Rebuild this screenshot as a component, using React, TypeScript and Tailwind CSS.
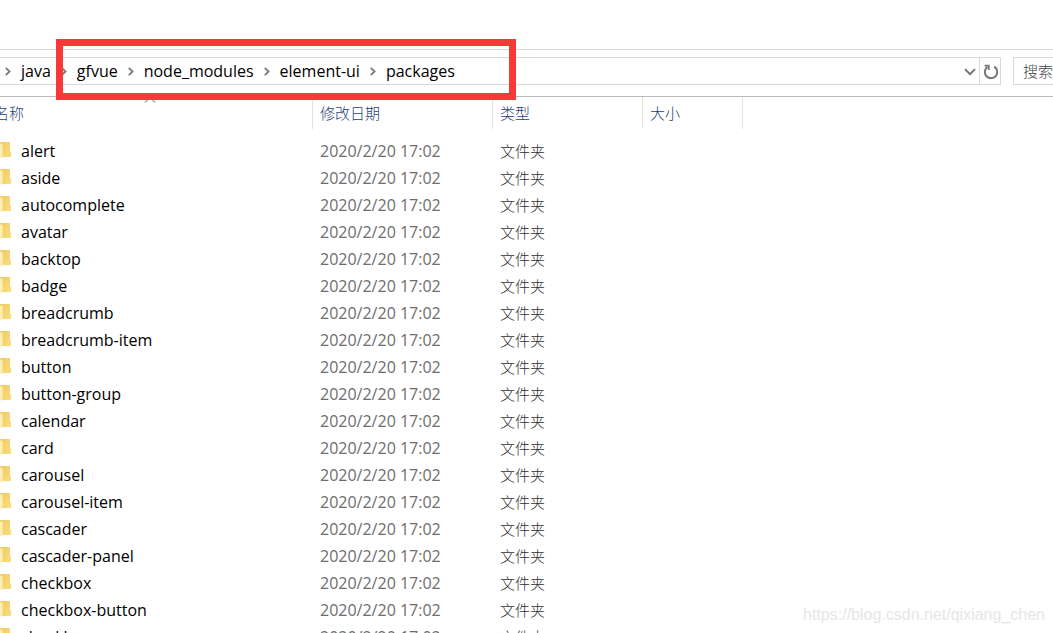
import { Fragment } from "react";

const crumbs = ["java", "gfvue", "node_modules", "element-ui", "packages"];

const folders = [
  "alert",
  "aside",
  "autocomplete",
  "avatar",
  "backtop",
  "badge",
  "breadcrumb",
  "breadcrumb-item",
  "button",
  "button-group",
  "calendar",
  "card",
  "carousel",
  "carousel-item",
  "cascader",
  "cascader-panel",
  "checkbox",
  "checkbox-button",
  "checkbox-group",
];

function Chevron() {
  return (
    <svg className="mx-[10px] h-[9px] w-[6px] shrink-0" viewBox="0 0 6 9" fill="none" aria-hidden="true">
      <path d="M0.8 0.8 L4.6 4.5 L0.8 8.2" stroke="#7a7a7a" strokeWidth="1.8" />
    </svg>
  );
}

function FolderIcon() {
  return (
    <svg className="h-[18px] w-[11px] shrink-0" viewBox="0 0 11 18" aria-hidden="true">
      <defs>
        <linearGradient id="folder" x1="0" y1="0" x2="1" y2="1">
          <stop offset="0" stopColor="#eecb68" />
          <stop offset="1" stopColor="#fbdc7c" />
        </linearGradient>
      </defs>
      <path d="M0 0 H10 V9 L11 10 V15 H0 Z" fill="url(#folder)" />
      <path d="M0 1 L2.6 2.2 V12.5 L1.5 16.5 L0 15.5 Z" fill="#ffeeb4" />
    </svg>
  );
}

export default function App() {
  return (
    <div className="relative h-screen overflow-hidden bg-white pt-[49px] font-['Open_Sans','Noto_Sans_CJK_SC',sans-serif] text-base text-black">
      <header className="flex h-12 border-t border-b border-t-[#dadada] border-b-[#b9b9b9] pt-[7px]">
        <div className="flex h-7 min-w-0 flex-1 border-y border-r border-[#d9d9d9]">
          <nav aria-label="路径" className="relative -ml-[5px] flex items-center">
            {crumbs.map((name) => (
              <Fragment key={name}>
                <Chevron />
                <button type="button" className="leading-5">
                  {name}
                </button>
              </Fragment>
            ))}
            <div className="pointer-events-none absolute -top-[19px] left-[61px] z-10 h-[61px] w-[460px] border-[7px] border-[#fb3838]" />
          </nav>
          <button type="button" aria-label="以前的位置" className="ml-auto flex w-[19px] items-center justify-center pt-0.5">
            <svg className="h-2 w-3" viewBox="0 0 12 8" fill="none">
              <path d="M1 1.2 L6 6.2 L11 1.2" stroke="#6e6e6e" strokeWidth="1.8" />
            </svg>
          </button>
          <button type="button" aria-label="刷新" className="flex w-[21px] items-center justify-center border-l border-[#d9d9d9] pt-0.5">
            <svg className="h-4 w-4" viewBox="0 0 16 16" fill="none">
              <path d="M12.2 2.6 A6.2 6.2 0 1 1 5.4 2.9" stroke="#757575" strokeWidth="2" />
              <path d="M2.6 1.6 H6.8 V6" stroke="#757575" strokeWidth="1.7" />
            </svg>
          </button>
        </div>
        <input
          type="text"
          aria-label="搜索"
          placeholder="搜索"
          className="ml-3 h-7 w-10 border border-r-0 border-[#d9d9d9] pl-[9px] text-[15px] font-light outline-none placeholder:text-[#404040]"
        />
      </header>

      <table className="w-[743px] table-fixed border-collapse text-left">
        <colgroup>
          <col className="w-[313px]" />
          <col className="w-[180px]" />
          <col className="w-[150px]" />
          <col className="w-[100px]" />
        </colgroup>
        <thead className="text-[15px] text-[#24407a]">
          <tr className="h-8">
            <th className="relative p-0 font-light shadow-[inset_-1px_0_0_#e3e3e3]">
              <div className="-ml-1.5 leading-5">名称</div>
              <svg className="absolute top-0 left-36 h-[6px] w-3" viewBox="0 0 12 6" fill="none" aria-hidden="true">
                <path d="M1 5.5 L6 0.5 L11 5.5" stroke="#555555" />
              </svg>
            </th>
            <th className="p-0 pl-[7px] leading-5 font-light shadow-[inset_-1px_0_0_#e3e3e3]">修改日期</th>
            <th className="p-0 pl-[7px] leading-5 font-light shadow-[inset_-1px_0_0_#e3e3e3]">类型</th>
            <th className="p-0 pl-[7px] leading-5 font-light shadow-[inset_-1px_0_0_#e3e3e3]">大小</th>
          </tr>
        </thead>
        <tbody>
          <tr aria-hidden="true" className="h-2">
            <td colSpan={4} className="p-0" />
          </tr>
          {folders.map((name) => (
            <tr key={name} className="h-[27px]">
              <td className="p-0">
                <div className="flex h-[27px] items-center gap-[10px]">
                  <FolderIcon />
                  <span className="leading-5">{name}</span>
                </div>
              </td>
              <td className="p-0 pl-[7px] leading-5 text-[#6d6d6d]">2020/2/20 17:02</td>
              <td className="p-0 pl-[7px] text-[15px] leading-5 font-light text-[#303030]">文件夹</td>
              <td className="p-0" />
            </tr>
          ))}
        </tbody>
      </table>

      <div className="pointer-events-none absolute right-2 bottom-2 font-['Liberation_Sans',Arial,sans-serif] text-base leading-5 text-[#e6e6e6]">
        https://blog.csdn.net/qixiang_chen
      </div>
    </div>
  );
}
